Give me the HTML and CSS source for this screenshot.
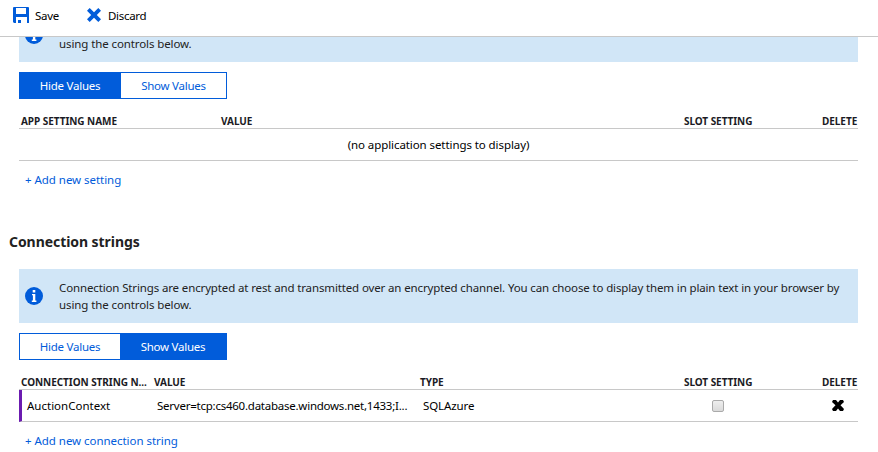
FILE: index.html
```html
<!DOCTYPE html>
<html lang="en">
<head>
<meta charset="utf-8">
<title>Application settings</title>
<link rel="stylesheet" href="styles.css">
</head>
<body>
<header class="toolbar">
  <button class="command save">
    <svg width="16" height="16" viewBox="0 0 16 16"><path fill="#015cda" fill-rule="evenodd" d="M1 0H15Q16 0 16 1V16H14V10H3V16H1L0 15V1Q0 0 1 0ZM3 1V7H13V1ZM5 13H8V16H5Z"/></svg>
    <span>Save</span>
  </button>
  <button class="command discard">
    <svg width="14" height="14" viewBox="0 0 14 14"><path fill="#015cda" d="M2.7 0 7 4.2 11.3 0 14 2.7 9.8 7 14 11.3 11.3 14 7 9.8 2.7 14 0 11.3 4.2 7 0 2.7Z"/></svg>
    <span>Discard</span>
  </button>
</header>
<main class="panel">
  <section class="settings">
    <div class="banner">
      <svg class="info" width="18" height="18" viewBox="0 0 18 18"><circle cx="9" cy="9" r="9" fill="#015cda"/><path fill="#fff" d="M7.7 3H10.3V5.5H7.7ZM7 7H10.3V13.6H11.4V15H6.8V13.6H7.9V8.2H7Z"/></svg>
      <p><span class="line-two">using the controls below.</span></p>
    </div>
    <div class="toggle"><button class="hide on">Hide Values</button><button class="show">Show Values</button></div>
    <div class="row head app"><span class="h-app">APP SETTING NAME</span><span class="h-value">VALUE</span><span class="h-slot">SLOT SETTING</span><span class="h-delete">DELETE</span></div>
    <div class="row empty"><span>(no application settings to display)</span></div>
    <a class="add add-setting">+ Add new setting</a>
  </section>
  <h2>Connection strings</h2>
  <section class="settings">
    <div class="banner">
      <svg class="info" width="18" height="18" viewBox="0 0 18 18"><circle cx="9" cy="9" r="9" fill="#015cda"/><path fill="#fff" d="M7.7 3H10.3V5.5H7.7ZM7 7H10.3V13.6H11.4V15H6.8V13.6H7.9V8.2H7Z"/></svg>
      <p><span class="line-one">Connection Strings are encrypted at rest and transmitted over an encrypted channel. You can choose to display them in plain text in your browser by</span><br><span class="line-two">using the controls below.</span></p>
    </div>
    <div class="toggle"><button class="hide">Hide Values</button><button class="show on">Show Values</button></div>
    <div class="row head conn"><span class="h-conn">CONNECTION STRING N...</span><span class="h-value">VALUE</span><span class="h-type">TYPE</span><span class="h-slot">SLOT SETTING</span><span class="h-delete">DELETE</span></div>
    <div class="row conn entry">
      <span class="name">AuctionContext</span><span class="value">Server=tcp:cs460.database.windows.net,1433;I...</span><span class="type">SQLAzure</span>
      <span class="check"></span>
      <svg class="remove" width="12" height="11" viewBox="0 0 12 11"><path d="M1 0H4L6 2.5 8 0H11L12 2 8.5 5.3 12 9 11 11H8L6 8.5 4 11H1L0 9 3.5 5.3 0 2Z"/></svg>
    </div>
    <a class="add add-conn">+ Add new connection string</a>
  </section>
</main>
</body>
</html>
```
FILE: styles.css
```css
* { box-sizing: border-box; }
body {
  margin: 0;
  height: 452px;
  overflow: hidden;
  display: flex;
  flex-direction: column;
  background: #fff;
  color: #000;
  font: 11.5px/17px "Noto Sans", "Open Sans", sans-serif;
}
button { font: inherit; letter-spacing: inherit; color: inherit; background: none; border: 0; padding: 0; white-space: nowrap; }
svg { flex: none; }
span, a { white-space: nowrap; }
.toolbar { flex: none; height: 37px; border-bottom: 1px solid #c8c8c8; display: flex; padding: 7px 0 0 13px; }
.command { display: flex; align-items: flex-start; height: 17px; letter-spacing: -.3px; }
.command span { margin-left: 6px; }
.discard { margin-left: 28px; }
.discard svg { margin-top: 1px; }
.discard span { margin-left: 7px; }
.save { width: 46px; }
.panel { flex: 1; overflow: hidden; }
.settings { margin: 0 20px 0 19px; }
.settings:first-child { margin-top: -29px; }
.banner { height: 54px; background: #d1e6f7; display: flex; padding: 0 0 0 6px; }
.info { margin-top: 18px; }
.banner p { margin: 10px 0 0 16px; color: #222; }
.settings:first-child .banner p { margin-top: 27px; }
.line-one { letter-spacing: -.135px; }
.line-two { letter-spacing: -.1px; }
.toggle { display: flex; height: 27px; width: 208px; margin-top: 10px; border: 1px solid #015cda; color: #015cda; letter-spacing: -.25px; }
.hide { width: 100px; }
.hide.on { width: 101px; padding-right: 1px; }
.show { flex: 1; }
.toggle .on { background: #015cda; color: #fff; }
.row { display: grid; border-bottom: 1px solid #c8c8c8; align-items: center; }
.app { grid-template-columns: 200px 463px 138px 1fr; }
.conn { grid-template-columns: 133px 266px 264px 138px 1fr; }
.head { height: 30px; padding: 15px 0 0 2px; font-size: 10px; line-height: 14px; font-weight: 700; letter-spacing: -.05px; color: #1b1b24; }
.empty { height: 32px; justify-items: center; letter-spacing: -.08px; }
.entry { height: 32px; padding-left: 5px; border-left: 3px solid #6b1bb0; }
.entry.conn { grid-template-columns: 130px 266px 289px 120px 1fr; }
.value { letter-spacing: -.24px; }
.type { letter-spacing: -.1px; }
.check { width: 12px; height: 12px; border: 1px solid #aaa; border-radius: 2px; background: linear-gradient(#eee, #dadada); }
.remove { display: block; }
.add { display: block; margin: 10px 0 0 6px; color: #015cda; letter-spacing: -.04px; }
h2 { margin: 44px 0 17px 9px; font-size: 14px; line-height: 20px; letter-spacing: -.06px; color: #222; }
```
